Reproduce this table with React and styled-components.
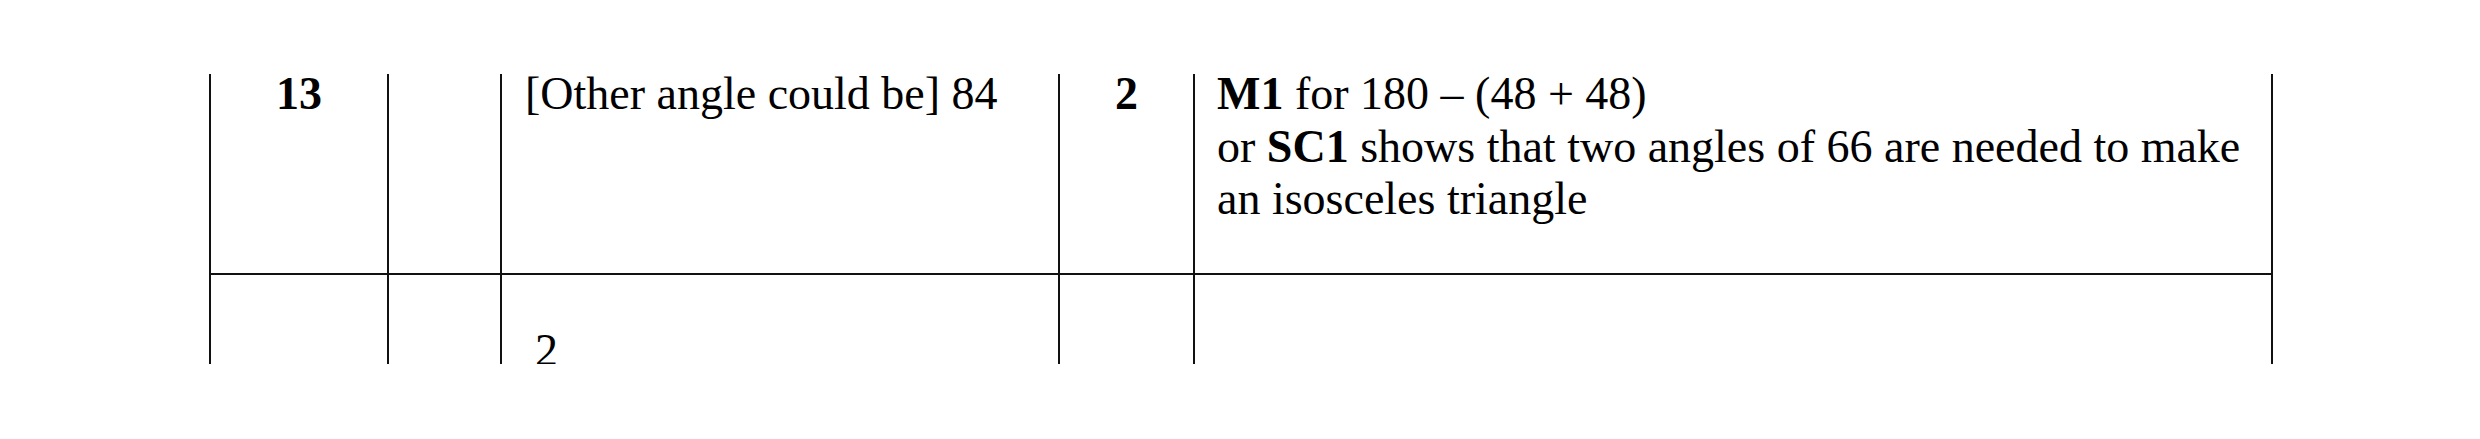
import React from 'react'
import styled, { createGlobalStyle } from 'styled-components'

const GlobalStyle = createGlobalStyle`
  html, body {
    margin: 0;
    padding: 0;
    background: #fff;
  }
  body {
    font-family: "Liberation Serif", "Times New Roman", serif;
    color: #000;
  }
`

const Page = styled.div`
  width: 2480px;
  height: 439px;
  padding: 74px 0 0 209px;
  box-sizing: border-box;
`

const Table = styled.div`
  width: 2064px;
`

// rows of the mark scheme; the last one is cut off by the page edge
const Row = styled.div`
  display: grid;
  grid-template-columns: 178px 113px 558px 135px 1078px;
  height: ${props => props.height}px;
  border-right: 2px solid #111;
  border-bottom: ${props => (props.ruled ? '2px solid #111' : 'none')};
  overflow: ${props => (props.clip ? 'hidden' : 'visible')};
  box-sizing: border-box;
  width: 2064px;
`

const Cell = styled.div`
  border-left: 2px solid #111;
  box-sizing: border-box;
  font-size: 46px;
  line-height: 52.5px;
  text-align: ${props => (props.center ? 'center' : 'left')};
  font-weight: ${props => (props.bold ? 'bold' : 'normal')};
  padding: ${props => props.pad || '0'};
  white-space: nowrap;
`

const Lines = styled.div`
  margin-top: ${props => props.shift || 0}px;
`

const Line = styled.div``

export default function App() {
  return (
    <>
      <GlobalStyle />
      <Page>
        <Table>
          <Row height={201} ruled>
            <Cell center bold>
              <Lines shift={-6}>13</Lines>
            </Cell>
            <Cell />
            <Cell pad="0 0 0 23px">
              <Lines shift={-6}>[Other angle could be] 84</Lines>
            </Cell>
            <Cell center bold>
              <Lines shift={-6}>2</Lines>
            </Cell>
            <Cell pad="0 0 0 22px">
              <Lines shift={-6}>
                <Line><b>M1</b> for 180 – (48 + 48)</Line>
                <Line>or <b>SC1</b> shows that two angles of 66 are needed to make</Line>
                <Line>an isosceles triangle</Line>
              </Lines>
            </Cell>
          </Row>
          <Row height={89} clip>
            <Cell />
            <Cell />
            <Cell pad="50px 0 0 33px">2</Cell>
            <Cell />
            <Cell />
          </Row>
        </Table>
      </Page>
    </>
  )
}
